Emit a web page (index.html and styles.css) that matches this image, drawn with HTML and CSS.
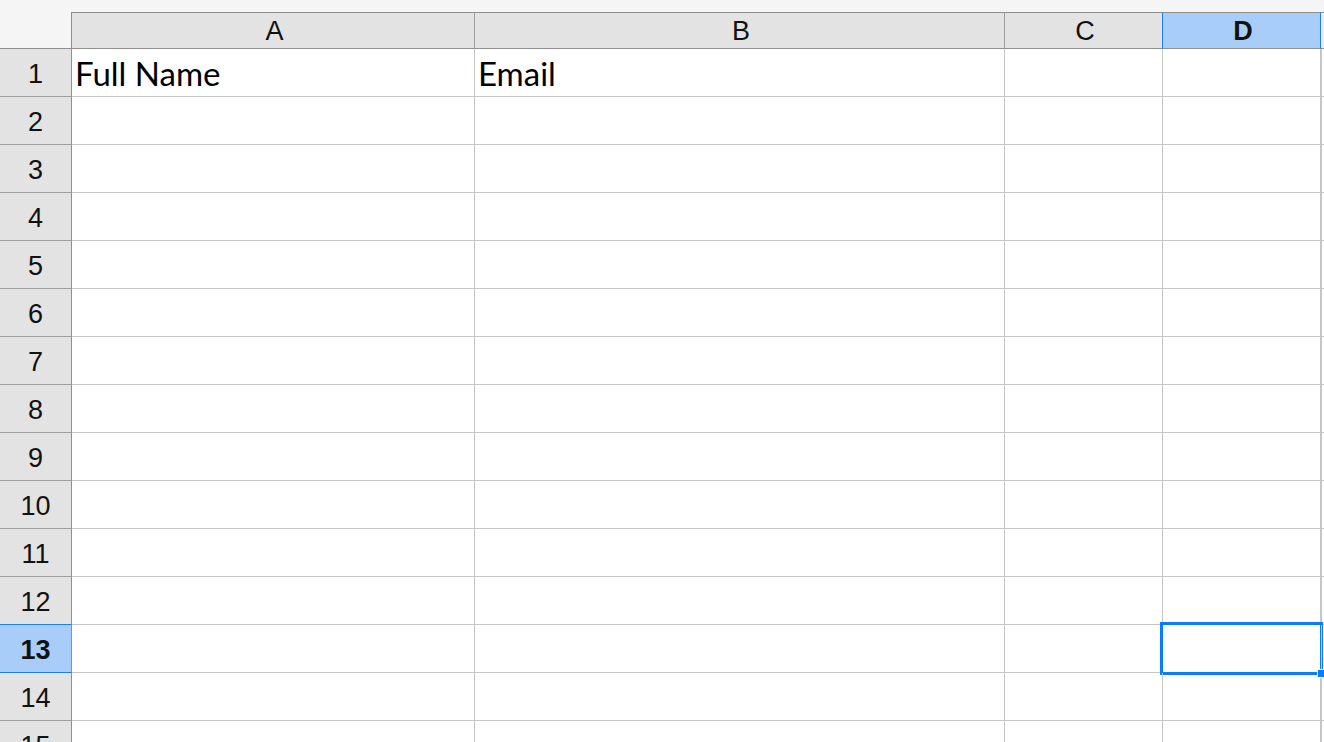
FILE: index.html
```html
<!DOCTYPE html>
<html>
<head>
<meta charset="utf-8">
<link rel="stylesheet" href="styles.css">
</head>
<body>
<div class="sheet">
  <div class="row head">
    <div class="corner"></div>
    <div class="ch">A</div>
    <div class="ch">B</div>
    <div class="ch before-sel">C</div>
    <div class="ch sel">D</div>
    <div class="ch extra"></div>
  </div>
  <div class="row"><div class="rh">1</div><div class="c">Full Name</div><div class="c">Email</div><div class="c"></div><div class="c"></div><div class="c extra"></div></div>
  <div class="row"><div class="rh">2</div><div class="c"></div><div class="c"></div><div class="c"></div><div class="c"></div><div class="c extra"></div></div>
  <div class="row"><div class="rh">3</div><div class="c"></div><div class="c"></div><div class="c"></div><div class="c"></div><div class="c extra"></div></div>
  <div class="row"><div class="rh">4</div><div class="c"></div><div class="c"></div><div class="c"></div><div class="c"></div><div class="c extra"></div></div>
  <div class="row"><div class="rh">5</div><div class="c"></div><div class="c"></div><div class="c"></div><div class="c"></div><div class="c extra"></div></div>
  <div class="row"><div class="rh">6</div><div class="c"></div><div class="c"></div><div class="c"></div><div class="c"></div><div class="c extra"></div></div>
  <div class="row"><div class="rh">7</div><div class="c"></div><div class="c"></div><div class="c"></div><div class="c"></div><div class="c extra"></div></div>
  <div class="row"><div class="rh">8</div><div class="c"></div><div class="c"></div><div class="c"></div><div class="c"></div><div class="c extra"></div></div>
  <div class="row"><div class="rh">9</div><div class="c"></div><div class="c"></div><div class="c"></div><div class="c"></div><div class="c extra"></div></div>
  <div class="row"><div class="rh">10</div><div class="c"></div><div class="c"></div><div class="c"></div><div class="c"></div><div class="c extra"></div></div>
  <div class="row"><div class="rh">11</div><div class="c"></div><div class="c"></div><div class="c"></div><div class="c"></div><div class="c extra"></div></div>
  <div class="row"><div class="rh before-sel-row">12</div><div class="c"></div><div class="c"></div><div class="c"></div><div class="c"></div><div class="c extra"></div></div>
  <div class="row"><div class="rh sel-row">13</div><div class="c"></div><div class="c"></div><div class="c"></div><div class="c active"><span class="handle"></span></div><div class="c extra"></div></div>
  <div class="row"><div class="rh">14</div><div class="c"></div><div class="c"></div><div class="c"></div><div class="c"></div><div class="c extra"></div></div>
  <div class="row"><div class="rh">15</div><div class="c"></div><div class="c"></div><div class="c"></div><div class="c"></div><div class="c extra"></div></div>
</div>
</body>
</html>
```
FILE: styles.css
```css
html, body {
  margin: 0;
  padding: 0;
  background: #f5f5f5;
  overflow: hidden;
  width: 1324px;
  height: 742px;
}

.sheet {
  padding-top: 12px;
}

.row {
  display: grid;
  grid-template-columns: 72px 403px 530px 158px 158px 3px;
  height: 48px;
  background: #fff;
}

.row.head {
  height: 37px;
  background: transparent;
}

.corner {
  border-right: 1px solid #8f8f8f;
  border-bottom: 1px solid #8f8f8f;
  background: #f5f5f5;
}

.ch {
  background: #e3e3e3;
  border-top: 1px solid #8f8f8f;
  border-bottom: 1px solid #8f8f8f;
  border-right: 1px solid #9e9e9e;
  display: flex;
  align-items: center;
  justify-content: center;
  padding-top: 1px;
  padding-left: 3px;
  box-sizing: border-box;
  font-family: "Liberation Sans", Arial, sans-serif;
  font-size: 27px;
  color: #111;
}

.ch.before-sel {
  border-right-color: #1a7ff0;
}

.ch.sel {
  background: #a8cdf8;
  border-right-color: #1a7ff0;
  font-weight: bold;
}

.ch.extra {
  background: #ececec;
  border-right: none;
  padding: 0;
}

.rh {
  background: #e3e3e3;
  border-right: 1px solid #8f8f8f;
  border-bottom: 1px solid #9e9e9e;
  display: flex;
  align-items: center;
  justify-content: center;
  padding-top: 4px;
  box-sizing: border-box;
  font-family: "Liberation Sans", Arial, sans-serif;
  font-size: 27px;
  color: #111;
}

.rh.before-sel-row {
  border-bottom-color: #1a7ff0;
}

.rh.sel-row {
  background: #a8cdf8;
  border-bottom-color: #1a7ff0;
  font-weight: bold;
}

.c {
  position: relative;
  border-right: 1px solid #c6c6c6;
  border-bottom: 1px solid #c6c6c6;
  display: flex;
  align-items: center;
  padding-left: 3px;
  padding-top: 0;
  box-sizing: border-box;
  font-family: Lato, "Noto Sans", sans-serif;
  font-size: 33px;
  color: #000;
  white-space: nowrap;
}

.c.extra {
  border-right: none;
  border-left: 1px solid #c6c6c6;
  padding: 0;
}

.c.active::before {
  content: "";
  position: absolute;
  left: -3px;
  top: -3px;
  width: 157px;
  height: 47px;
  border: 3px solid #0a7cff;
}

.handle {
  position: absolute;
  right: -4px;
  bottom: -5px;
  width: 6px;
  height: 7px;
  background: #0a7cff;
  outline: 1px solid #fff;
  z-index: 2;
}
```
